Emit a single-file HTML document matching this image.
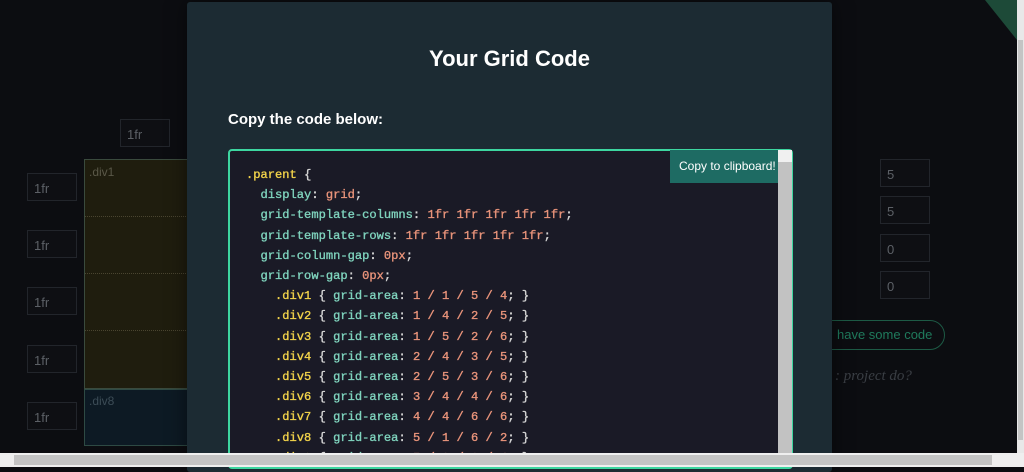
<!DOCTYPE html>
<html><head><style>
*{box-sizing:border-box;margin:0;padding:0}
body{width:1024px;height:467px;overflow:hidden;background:#0c0d11;font-family:"Liberation Sans",sans-serif;position:relative}
.a{position:absolute}
.inp{position:absolute;border:1px solid #22252b;background:#0e0f13;color:#5c6066;font-size:13px;padding:7px 0 0 6px;width:50px;height:28px}
.code{font-family:"Liberation Mono",monospace;font-size:12.1px;line-height:20.2px;color:#d6d6d6;white-space:pre;-webkit-text-stroke:0.35px}
.k{color:#7fd3bd}.v{color:#e8937a}.s{color:#f1d24a}
</style></head><body>
<div class="inp" style="left:120px;top:119px">1fr</div>
<div class="inp" style="left:27px;top:173px">1fr</div>
<div class="inp" style="left:27px;top:230px">1fr</div>
<div class="inp" style="left:27px;top:287px">1fr</div>
<div class="inp" style="left:27px;top:345px">1fr</div>
<div class="inp" style="left:27px;top:402px">1fr</div>
<div class="a" style="left:84px;top:159px;width:110px;height:230px;background:#1f1d0e;border:1px solid #3a4a3d"></div>
<div class="a" style="left:85px;top:216px;width:105px;border-top:1px dotted #4a4530"></div>
<div class="a" style="left:85px;top:273px;width:105px;border-top:1px dotted #4a4530"></div>
<div class="a" style="left:85px;top:330px;width:105px;border-top:1px dotted #4a4530"></div>
<div class="a" style="left:89px;top:165px;color:#5a5848;font-size:12px">.div1</div>
<div class="a" style="left:84px;top:389px;width:110px;height:57px;background:#0d1a24;border:1px solid #2e4a44"></div>
<div class="a" style="left:89px;top:394px;color:#3c4c56;font-size:12px">.div8</div>
<div class="inp" style="left:880px;top:159px">5</div>
<div class="inp" style="left:880px;top:196px">5</div>
<div class="inp" style="left:880px;top:234px">0</div>
<div class="inp" style="left:880px;top:271px">0</div>
<div class="a" style="left:800px;top:320px;width:145px;height:30px;border:1px solid #1d5a45;border-radius:0 15px 15px 0;color:#1f7a5c;font-size:13px;padding:6px 0 0 36px">have some code</div>
<div class="a" style="left:835px;top:368px;color:#3a3e44;font-size:15px;font-style:italic;font-family:'Liberation Serif',serif">: project do?</div>
<div class="a" style="left:985px;top:0;width:0;height:0;border-top:40px solid #1d4a38;border-left:32px solid transparent"></div>
<div class="a" style="left:187px;top:2px;width:645px;height:470px;background:#1c2b33;border-radius:3px;box-shadow:0 0 20px rgba(0,0,0,.5)"></div>
<div class="a" style="left:187px;top:46px;width:645px;text-align:center;color:#fff;font-weight:bold;font-size:22px">Your Grid Code</div>
<div class="a" style="left:228px;top:111px;color:#fff;font-weight:bold;font-size:15px">Copy the code below:</div>
<div class="a" style="left:228px;top:149px;width:565px;height:320px;background:#1a1a26;border:2px solid #3dd6a0;border-radius:4px"></div>
<div class="a" style="left:778px;top:150px;width:14px;height:305px;background:#c2c2c2"></div>
<div class="a" style="left:778px;top:150px;width:14px;height:12px;background:#f0f0f0"></div>
<div class="a" style="left:670px;top:150px;width:108px;height:33px;background:#1e6b63;color:#fff;font-size:12px;padding:9px 0 0 9px">Copy to clipboard!</div>
<div class="a code" style="left:246px;top:165px"><span class="s">.parent</span> {
  <span class="k">display</span>: <span class="v">grid</span>;
  <span class="k">grid-template-columns</span>: <span class="v">1fr 1fr 1fr 1fr 1fr</span>;
  <span class="k">grid-template-rows</span>: <span class="v">1fr 1fr 1fr 1fr 1fr</span>;
  <span class="k">grid-column-gap</span>: <span class="v">0px</span>;
  <span class="k">grid-row-gap</span>: <span class="v">0px</span>;
    <span class="s">.div1</span> { <span class="k">grid-area</span>: <span class="v">1 / 1 / 5 / 4</span>; }
    <span class="s">.div2</span> { <span class="k">grid-area</span>: <span class="v">1 / 4 / 2 / 5</span>; }
    <span class="s">.div3</span> { <span class="k">grid-area</span>: <span class="v">1 / 5 / 2 / 6</span>; }
    <span class="s">.div4</span> { <span class="k">grid-area</span>: <span class="v">2 / 4 / 3 / 5</span>; }
    <span class="s">.div5</span> { <span class="k">grid-area</span>: <span class="v">2 / 5 / 3 / 6</span>; }
    <span class="s">.div6</span> { <span class="k">grid-area</span>: <span class="v">3 / 4 / 4 / 6</span>; }
    <span class="s">.div7</span> { <span class="k">grid-area</span>: <span class="v">4 / 4 / 6 / 6</span>; }
    <span class="s">.div8</span> { <span class="k">grid-area</span>: <span class="v">5 / 1 / 6 / 2</span>; }
    <span class="s">.div9</span> { <span class="k">grid-area</span>: <span class="v">5 / 2 / 6 / 4</span>; }</div>
<div class="a" style="left:1017px;top:0;width:7px;height:453px;background:#e8e8e8"></div>
<div class="a" style="left:1018px;top:40px;width:5px;height:400px;background:#c4c4c4"></div>
<div class="a" style="left:0;top:453px;width:1024px;height:14px;background:#efefef"></div>
<div class="a" style="left:14px;top:455px;width:978px;height:10px;background:#c4c4c4"></div>
</body></html>
